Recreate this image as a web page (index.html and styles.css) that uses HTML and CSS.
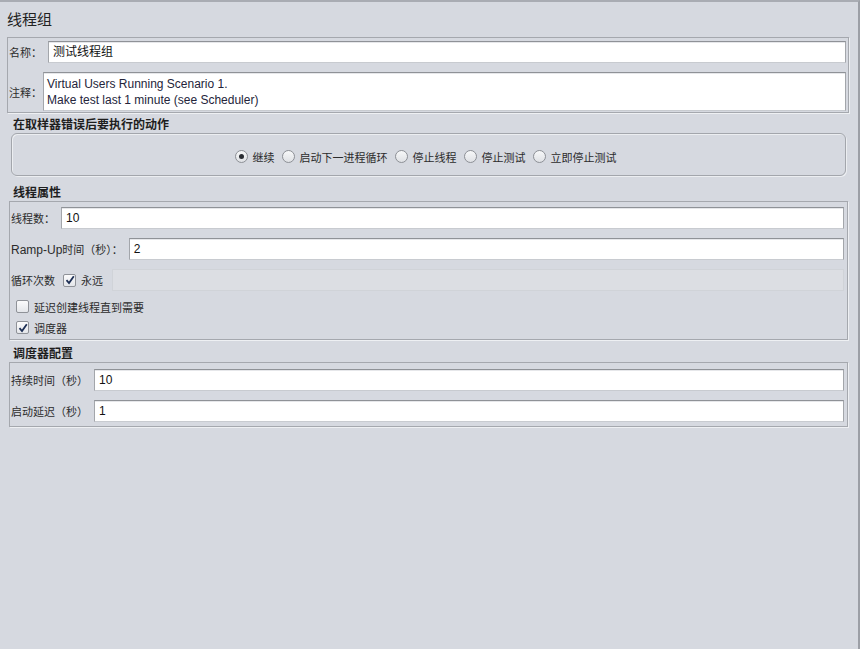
FILE: index.html
```html
<!DOCTYPE html>
<html lang="zh-CN">
<head>
    <meta charset="UTF-8">
    <title>线程组</title>
    <link rel="stylesheet" href="styles.css">
</head>
<body>
    <div class="page">
        <h1 class="title">线程组</h1>

        <!-- Name / comment -->
        <div class="panel name-panel">
            <div class="row">
                <label class="label name-label">名称：</label>
                <div class="field">测试线程组</div>
            </div>
            <div class="row">
                <label class="label comment-label">注释：</label>
                <div class="field area">Virtual Users Running Scenario 1.<br>Make test last 1 minute (see Scheduler)</div>
            </div>
        </div>

        <!-- Sampler error action -->
        <h2 class="section-title">在取样器错误后要执行的动作</h2>
        <div class="action-box">
            <span class="radio checked"></span><span class="radio-label">继续</span>
            <span class="radio"></span><span class="radio-label">启动下一进程循环</span>
            <span class="radio"></span><span class="radio-label">停止线程</span>
            <span class="radio"></span><span class="radio-label">停止测试</span>
            <span class="radio"></span><span class="radio-label">立即停止测试</span>
        </div>

        <!-- Thread properties -->
        <h2 class="section-title">线程属性</h2>
        <div class="panel props-panel">
            <div class="row">
                <label class="label">线程数：</label>
                <div class="field">10</div>
            </div>
            <div class="row">
                <label class="label"><span class="latin">Ramp-Up</span>时间（秒）：</label>
                <div class="field">2</div>
            </div>
            <div class="row loop-row">
                <label class="label">循环次数</label>
                <span class="check">
                    <svg width="10" height="10" viewBox="0 0 10 10"><path d="M1.5 5.2 L4 8 L8.8 1.2" fill="none" stroke="#1d2f55" stroke-width="1.8"/></svg>
                </span>
                <span class="check-label">永远</span>
                <div class="field disabled"></div>
            </div>
            <div class="check-row">
                <span class="check"></span>
                <span class="check-label">延迟创建线程直到需要</span>
            </div>
            <div class="check-row">
                <span class="check">
                    <svg width="10" height="10" viewBox="0 0 10 10"><path d="M1.5 5.2 L4 8 L8.8 1.2" fill="none" stroke="#1d2f55" stroke-width="1.8"/></svg>
                </span>
                <span class="check-label">调度器</span>
            </div>
        </div>

        <!-- Scheduler -->
        <h2 class="section-title">调度器配置</h2>
        <div class="panel sched-panel">
            <div class="row">
                <label class="label">持续时间（秒）</label>
                <div class="field">10</div>
            </div>
            <div class="row">
                <label class="label">启动延迟（秒）</label>
                <div class="field">1</div>
            </div>
        </div>
    </div>
</body>
</html>
```

FILE: styles.css
```css
/* Basic reset */
* {
    margin: 0;
    padding: 0;
    box-sizing: border-box;
}

body {
    font-family: "Liberation Sans", "Noto Sans CJK SC", sans-serif;
    font-size: 11px;
    color: #2b2b2b;
    background-color: #d6d9e0;
}

.latin {
    font-size: 12px;
}

.page {
    min-height: 100vh;
    border-top: 2px solid #a9acb3;
    border-right: 2px solid #9c9fa6;
    padding: 7px 9px 0 7px;
}

.title {
    font-size: 15px;
    font-weight: normal;
    line-height: 22px;
    color: #222;
}

/* Panels */
.panel {
    border: 1px solid #a5a8ae;
    box-shadow: 1px 1px 0 #eef0f3;
    display: flex;
    flex-direction: column;
    gap: 9px;
}

.name-panel {
    margin-top: 6px;
    padding: 3px 2px 1px 1px;
}

.props-panel,
.sched-panel {
    margin-left: 2px;
    margin-right: 1px;
    padding: 5px 3px 5px 1px;
}

.sched-panel {
    padding-top: 6px;
    padding-bottom: 4px;
}

.row {
    display: flex;
    align-items: center;
}

.label {
    white-space: nowrap;
    padding-right: 6px;
}

.name-label {
    width: 39px;
    padding-right: 0;
}

.comment-label {
    width: 34px;
    padding-right: 0;
}

.field {
    flex: 1;
    height: 22px;
    line-height: 20px;
    padding: 0 4px;
    font-size: 12px;
    background: #fff;
    border: 1px solid #a3a6ab;
    border-top-color: #8f9297;
    border-bottom-color: #c8cbd0;
    box-shadow: inset 0 1px 0 #e6e7ea;
    color: #111;
}

.area {
    height: 39px;
    line-height: 16px;
    padding: 3px 3px 0;
    color: #24243a;
}

.field.disabled {
    background: #dcdee3;
    border-color: #d0d3d8;
    box-shadow: none;
    margin-left: 9px;
}

/* Section titles */
.section-title {
    font-size: 12px;
    font-weight: bold;
    line-height: 16px;
    color: #1e1e1e;
    margin: 4px 0 0 6px;
}

.action-box {
    margin: 0 3px 0 4px;
    height: 43px;
    border: 1px solid #a3a6ac;
    border-radius: 6px;
    box-shadow: inset 1px 1px 0 #eceef1, 1px 1px 0 #eceef1;
    display: flex;
    align-items: center;
    justify-content: center;
    padding-top: 4px;
    padding-left: 1px;
}

.action-box + .section-title {
    margin-top: 9px;
}

.props-panel + .section-title {
    margin-top: 6px;
}

/* Radio buttons */
.radio {
    width: 13px;
    height: 13px;
    border-radius: 50%;
    border: 1px solid #8d9096;
    background: linear-gradient(#f7f8f9, #dfe1e5);
    position: relative;
    margin-right: 5px;
}

.radio.checked::after {
    content: "";
    position: absolute;
    left: 3px;
    top: 3px;
    width: 5px;
    height: 5px;
    border-radius: 50%;
    background: #2a2d33;
}

.radio-label {
    margin-right: 7px;
}

/* Checkboxes */
.check {
    width: 13px;
    height: 13px;
    border: 1px solid #8f9298;
    border-radius: 2px;
    background: linear-gradient(#fbfbfc, #e4e6ea);
    display: inline-flex;
    align-items: center;
    justify-content: center;
    flex-shrink: 0;
}

.check-label {
    margin-left: 5px;
}

.loop-row .label {
    padding-right: 8px;
}

.check-row {
    display: flex;
    align-items: center;
    height: 13px;
    padding-left: 5px;
}

.check-row + .check-row {
    margin-top: -1px;
}
```
